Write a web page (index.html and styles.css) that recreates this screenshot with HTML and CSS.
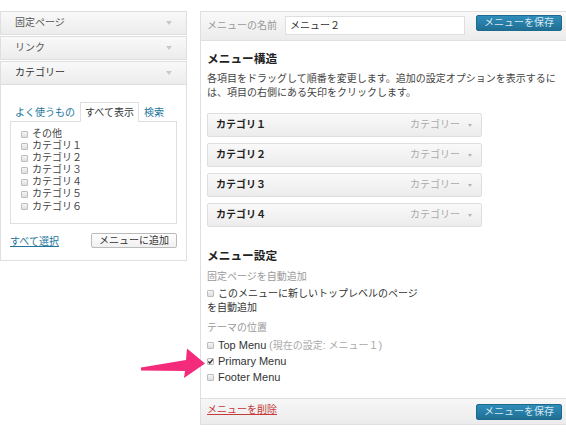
FILE: index.html
```html
<!DOCTYPE html>
<html lang="ja">
<head>
<meta charset="utf-8">
<title>メニュー</title>
<link rel="stylesheet" href="styles.css">
</head>
<body>
<div class="page">
  <aside class="side">
    <div class="acc"><span>固定ページ</span><i class="tri"></i></div>
    <div class="acc"><span>リンク</span><i class="tri"></i></div>
    <div class="acc open"><span>カテゴリー</span><i class="tri"></i></div>
    <div class="acc-body">
      <div class="tabs">
        <span class="tab link">よく使うもの</span><span class="tab active">すべて表示</span><span class="tab link">検索</span>
      </div>
      <ul class="cats">
        <li><span class="cb"></span>その他</li>
        <li><span class="cb"></span>カテゴリ１</li>
        <li><span class="cb"></span>カテゴリ２</li>
        <li><span class="cb"></span>カテゴリ３</li>
        <li><span class="cb"></span>カテゴリ４</li>
        <li><span class="cb"></span>カテゴリ５</li>
        <li><span class="cb"></span>カテゴリ６</li>
      </ul>
      <div class="acc-foot">
        <a class="link ul" href="#">すべて選択</a>
        <button class="btn">メニューに追加</button>
      </div>
    </div>
  </aside>

  <main class="panel">
    <div class="panel-head">
      <span class="name-label">メニューの名前</span>
      <span class="name-input">メニュー２</span>
      <button class="btn-primary">メニューを保存</button>
    </div>
    <div class="panel-body">
      <h3 class="h">メニュー構造</h3>
      <p class="desc">各項目をドラッグして順番を変更します。追加の設定オプションを表示するには、項目の右側にある矢印をクリックします。</p>
      <ul class="items">
        <li class="item"><span class="item-title">カテゴリ１</span><span class="item-type">カテゴリー</span><i class="mini-tri"></i></li>
        <li class="item"><span class="item-title">カテゴリ２</span><span class="item-type">カテゴリー</span><i class="mini-tri"></i></li>
        <li class="item"><span class="item-title">カテゴリ３</span><span class="item-type">カテゴリー</span><i class="mini-tri"></i></li>
        <li class="item"><span class="item-title">カテゴリ４</span><span class="item-type">カテゴリー</span><i class="mini-tri"></i></li>
      </ul>
      <h3 class="h h2">メニュー設定</h3>
      <div class="sub">固定ページを自動追加</div>
      <div class="auto"><span class="cb"></span>このメニューに新しいトップレベルのページ<br>を自動追加</div>
      <div class="sub sub2">テーマの位置</div>
      <ul class="locs">
        <li><span class="cb"></span><span class="en">Top Menu</span> <span class="note"><span class="en">(</span>現在の設定<span class="en">:</span> メニュー１<span class="en">)</span></span></li>
        <li><span class="cb checked"><svg viewBox="0 0 7 7" width="7" height="7"><path d="M1.3 3.6 L2.8 5.1 L5.8 1.4" fill="none" stroke="#333" stroke-width="1.4"/></svg></span><span class="en">Primary Menu</span></li>
        <li><span class="cb"></span><span class="en">Footer Menu</span></li>
      </ul>
    </div>
    <div class="panel-foot">
      <a class="del" href="#">メニューを削除</a>
      <button class="btn-primary">メニューを保存</button>
    </div>
  </main>
</div>
<svg class="arrow" width="70" height="36" viewBox="140 345 70 36">
  <polygon points="141,367.5 186,360 187,348.5 205,363.5 184,378 185,371 141,370.5" fill="#f42a7b"/>
</svg>
</body>
</html>
```

FILE: styles.css
```css
* { box-sizing: border-box; }
html, body { margin: 0; padding: 0; background: #fff; }
body {
  font-family: "Liberation Sans", "Noto Sans CJK JP", sans-serif;
  font-size: 10px;
  color: #333;
  width: 566px;
  height: 433px;
  overflow: hidden;
  position: relative;
}
ul { list-style: none; margin: 0; padding: 0; }
p, h3 { margin: 0; }
a { text-decoration: none; }
button { font-family: inherit; font-size: 10px; cursor: pointer; margin: 0; }

.page {
  display: flex;
  align-items: flex-start;
  padding-top: 11px;
  gap: 13px;
}

/* ---------- left column ---------- */
.side {
  width: 187px;
  flex: none;
  display: flex;
  flex-direction: column;
  gap: 1px;
}
.acc {
  height: 24px;
  border: 1px solid #dfdfdf;
  background: linear-gradient(#f9f9f9, #ececec);
  display: flex;
  align-items: center;
  justify-content: space-between;
  padding: 0 14px 0 14px;
  color: #555;
  line-height: 22px;
}
.acc.open { color: #333; }
.tri {
  width: 0; height: 0;
  border-left: 3px solid transparent;
  border-right: 3px solid transparent;
  border-top: 4px solid #c9c9c9;
}
.acc-body {
  margin-top: -1px;
  border: 1px solid #dfdfdf;
  border-top: none;
  padding: 17px 9px 12px 9px;
  background: #fff;
}
.tabs { display: flex; }
.tab {
  line-height: 17px;
  padding: 1px 4px 0 4px;
  border: 1px solid transparent;
  border-bottom: none;
}
.tab.active {
  border-color: #dfdfdf;
  background: #fff;
  color: #333;
  position: relative;
  margin-bottom: -1px;
  padding-bottom: 1px;
}
.link { color: #21759b; }
.ul { text-decoration: underline; }
.cats {
  border: 1px solid #dfdfdf;
  padding: 6px 10px 10px 10px;
  color: #444;
}
.cats li {
  line-height: 12.1px;
  display: flex;
  align-items: center;
}
.cb {
  display: inline-block;
  width: 7px;
  height: 7px;
  border: 1px solid #bdbdbd;
  border-radius: 1px;
  background: linear-gradient(#f6f6f6, #dedede);
  margin-right: 4px;
  flex: none;
  vertical-align: middle;
  position: relative;
}
.cb.checked { background: #f4f4f4; }
.cb.checked svg {
  position: absolute;
  left: -1px;
  top: -1px;
}
.acc-foot {
  margin-top: 9px;
  display: flex;
  justify-content: space-between;
  align-items: center;
}
.btn {
  height: 15px;
  padding: 0 7px;
  border: 1px solid #bbb;
  border-radius: 2px;
  background: linear-gradient(#fefefe, #f0f0f0);
  color: #333;
  line-height: 13px;
}

/* ---------- right panel ---------- */
.panel {
  flex: 1;
  border-left: 1px solid #dfdfdf;
  border-top: 1px solid #dfdfdf;
}
.panel-head {
  height: 29px;
  background: linear-gradient(#f9f9f9, #ececec);
  border-bottom: 1px solid #dfdfdf;
  display: flex;
  align-items: flex-start;
  padding: 0 4px 0 6px;
}
.name-label {
  color: #999;
  line-height: 19px;
  margin-top: 4px;
  width: 78px;
  flex: none;
}
.name-input {
  margin-top: 4px;
  width: 180px;
  height: 19px;
  border: 1px solid #dfdfdf;
  background: #fff;
  padding: 0 4px;
  line-height: 17px;
  color: #333;
}
.btn-primary {
  margin-left: auto;
  margin-top: 3px;
  width: 86px;
  height: 16px;
  padding: 0;
  border: 1px solid #1e6a8d;
  border-radius: 2px;
  background: linear-gradient(#2f8dba, #206f93);
  color: #d6e8f1;
  line-height: 14px;
  text-align: center;
}
.panel-body {
  padding: 11px 6px 12px 6px;
}
.h {
  font-weight: bold;
  line-height: 14px;
  margin-bottom: 6px;
  color: #222;
}
.desc {
  line-height: 14px;
  color: #444;
  width: 352px;
  margin-bottom: 13px;
}
.items {
  width: 275px;
  display: flex;
  flex-direction: column;
  gap: 6px;
}
.item {
  height: 24px;
  border: 1px solid #dfdfdf;
  border-radius: 2px;
  background: linear-gradient(#f9f9f9, #ececec);
  display: flex;
  align-items: center;
  padding: 0 9px 0 8px;
  line-height: 22px;
}
.item-title { font-weight: bold; color: #222; flex: 1; }
.item-type { color: #aaa; }
.mini-tri {
  margin-left: 8px;
  width: 0; height: 0;
  border-left: 2.5px solid transparent;
  border-right: 2.5px solid transparent;
  border-top: 3.5px solid #b5b5b5;
}
.h2 { margin-top: 22px; margin-bottom: 6.5px; }
.sub { color: #999; line-height: 14px; }
.auto {
  margin-top: 3px;
  line-height: 14px;
  color: #333;
}
.auto .cb { margin-right: 4px; vertical-align: 0; }
.sub2 { margin-top: 6.5px; }
.locs { margin-top: 1.5px; }
.locs li {
  height: 16.3px;
  line-height: 16.3px;
  color: #333;
}
.locs .cb { margin-right: 4px; vertical-align: 0; }
.en { font-size: 11px; }
.note { color: #aaa; }
.panel-foot {
  height: 27px;
  margin-top: 1px;
  border-top: 1px solid #dfdfdf;
  border-bottom: 1px solid #dfdfdf;
  background: linear-gradient(#f7f7f7, #ececec);
  display: flex;
  align-items: flex-start;
  padding: 0 4px 0 6px;
}
.del {
  color: #c63a3a;
  text-decoration: underline;
  line-height: 14px;
  margin-top: 4px;
}
.panel-foot .btn-primary { margin-top: 5px; }

/* ---------- annotation arrow ---------- */
.arrow {
  position: absolute;
  left: 140px;
  top: 345px;
}
```
